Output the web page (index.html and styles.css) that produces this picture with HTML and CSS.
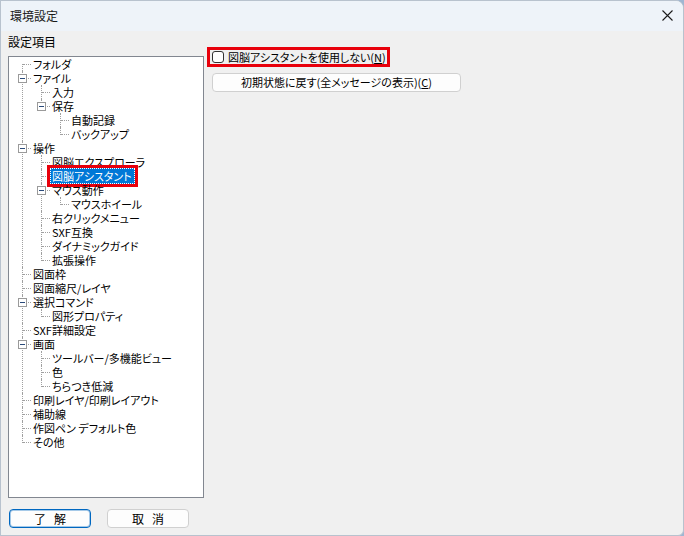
FILE: index.html
```html
<!DOCTYPE html>
<html lang="ja">
<head>
  <meta charset="UTF-8">
  <title>環境設定</title>
  <link rel="stylesheet" href="styles.css">
</head>
<body>
  <div class="window">
    <div class="titlebar">
      <span class="title">環境設定</span>
      <span class="close">
        <svg width="11" height="11" viewBox="0 0 11 11"><path d="M0.5 0.5 L10.5 10.5 M10.5 0.5 L0.5 10.5" stroke="#1b1b1b" stroke-width="1.1" fill="none"/></svg>
      </span>
    </div>

    <div class="content">
      <div class="left">
        <div class="caption">設定項目</div>
        <div class="tree">
          <ul>
            <li class="first"><div class="row"><span class="lbl">フォルダ</span></div></li>
            <li><div class="row"><span class="tg"></span><span class="lbl">ファイル</span></div>
              <ul>
                <li><div class="row"><span class="lbl">入力</span></div></li>
                <li><div class="row"><span class="tg"></span><span class="lbl">保存</span></div>
                  <ul>
                    <li><div class="row"><span class="lbl">自動記録</span></div></li>
                    <li><div class="row"><span class="lbl">バックアップ</span></div></li>
                  </ul>
                </li>
              </ul>
            </li>
            <li><div class="row"><span class="tg"></span><span class="lbl">操作</span></div>
              <ul>
                <li><div class="row"><span class="lbl">図脳エクスプローラ</span></div></li>
                <li><div class="row"><span class="lbl sel">図脳アシスタント</span></div></li>
                <li><div class="row"><span class="tg"></span><span class="lbl">マウス動作</span></div>
                  <ul>
                    <li><div class="row"><span class="lbl">マウスホイール</span></div></li>
                  </ul>
                </li>
                <li><div class="row"><span class="lbl">右クリックメニュー</span></div></li>
                <li><div class="row"><span class="lbl">SXF互換</span></div></li>
                <li><div class="row"><span class="lbl">ダイナミックガイド</span></div></li>
                <li><div class="row"><span class="lbl">拡張操作</span></div></li>
              </ul>
            </li>
            <li><div class="row"><span class="lbl">図面枠</span></div></li>
            <li><div class="row"><span class="lbl">図面縮尺/レイヤ</span></div></li>
            <li><div class="row"><span class="tg"></span><span class="lbl">選択コマンド</span></div>
              <ul>
                <li><div class="row"><span class="lbl">図形プロパティ</span></div></li>
              </ul>
            </li>
            <li><div class="row"><span class="lbl">SXF詳細設定</span></div></li>
            <li><div class="row"><span class="tg"></span><span class="lbl">画面</span></div>
              <ul>
                <li><div class="row"><span class="lbl">ツールバー/多機能ビュー</span></div></li>
                <li><div class="row"><span class="lbl">色</span></div></li>
                <li><div class="row"><span class="lbl">ちらつき低減</span></div></li>
              </ul>
            </li>
            <li><div class="row"><span class="lbl">印刷レイヤ/印刷レイアウト</span></div></li>
            <li><div class="row"><span class="lbl">補助線</span></div></li>
            <li><div class="row"><span class="lbl">作図ペン デフォルト色</span></div></li>
            <li><div class="row"><span class="lbl">その他</span></div></li>
          </ul>
        </div>
        <div class="buttons">
          <button class="btn default">了&nbsp;&nbsp;&nbsp;解</button>
          <button class="btn">取&nbsp;&nbsp;&nbsp;消</button>
        </div>
      </div>

      <div class="right">
        <label class="check mark">
          <span class="box"></span>
          <span>図脳アシスタントを使用しない(<u>N</u>)</span>
        </label>
        <button class="btn wide">初期状態に戻す(全メッセージの表示)(<u>C</u>)</button>
      </div>
    </div>
  </div>
</body>
</html>
```

FILE: styles.css
```css
* {
  box-sizing: border-box;
}
body {
  margin: 0;
  background: #9fb6d2;
  font-family: "Noto Sans CJK JP", sans-serif;
  font-size: 11px;
  color: #000;
  font-feature-settings: "palt";
}
.window {
  width: 684px;
  height: 536px;
  background: #f0f0f0;
  border: 1px solid #b8c2ce;
  border-top-right-radius: 8px;
  border-bottom-right-radius: 6px;
  overflow: hidden;
}
.titlebar {
  height: 30px;
  background: #eef3f9;
  display: flex;
  align-items: center;
  justify-content: space-between;
  padding: 0 10px 0 9px;
}
.title {
  color: #1a1a1a;
  font-size: 12px;
  line-height: 14px;
}
.close {
  display: flex;
  width: 11px;
  height: 11px;
  margin-top: -2px;
}
.content {
  display: flex;
  gap: 3px;
  padding: 4px 0 0 7px;
}
.left {
  width: 196px;
}
.caption {
  font-size: 12px;
  line-height: 14px;
  margin-bottom: 7px;
}
.tree {
  height: 442px;
  background: #fff;
  border: 1px solid #828790;
  overflow: hidden;
}
.tree ul {
  list-style: none;
  margin: 0;
  padding: 0;
}
.tree ul ul {
  margin-left: 19px;
}
.tree li {
  position: relative;
}
.tree li::before {
  content: "";
  position: absolute;
  left: 13px;
  top: 0;
  bottom: 0;
  border-left: 1px dotted #a0a0a0;
}
.tree li.first::before {
  top: 7px;
}
.tree li:last-child::before {
  bottom: auto;
  height: 8px;
}
.row {
  position: relative;
  height: 14px;
  line-height: 14px;
  padding-left: 22px;
  white-space: nowrap;
}
.row::before {
  content: "";
  position: absolute;
  left: 14px;
  top: 7px;
  width: 8px;
  border-top: 1px dotted #a0a0a0;
}
.tg {
  position: absolute;
  left: 9px;
  top: 3px;
  width: 9px;
  height: 9px;
  border: 1px solid #9a9a9a;
  background: #fff;
  z-index: 1;
}
.tg::after {
  content: "";
  position: absolute;
  left: 1px;
  top: 3px;
  width: 5px;
  height: 1px;
  background: #2a4a7a;
}
.lbl {
  display: inline-block;
  padding: 0 2px;
}
.lbl.sel {
  position: relative;
  height: 16px;
  line-height: 14px;
  margin-top: -1px;
  vertical-align: top;
  background: #0078d7;
  color: #fff;
  border: 1px dotted #fff;
  padding: 0 2px 0 1px;
  outline: 3px solid #e8000b;
}
.buttons {
  display: flex;
  gap: 16px;
  margin: 11px 0 0 1px;
}
.btn {
  font-family: inherit;
  font-size: 11px;
  font-feature-settings: "palt";
  height: 19px;
  line-height: 15px;
  padding: 0;
  background: #fdfdfd;
  border: 1px solid #d0d0d0;
  border-radius: 4px;
  color: #000;
}
.buttons .btn {
  width: 82px;
  font-size: 12px;
}
.btn.default {
  border-color: #0067c0;
  box-shadow: inset 0 0 0 1px rgba(0, 103, 192, 0.35);
}
.right {
  display: flex;
  flex-direction: column;
  align-items: flex-start;
  padding-top: 12px;
}
.check {
  display: flex;
  align-items: center;
  gap: 4px;
  height: 20px;
  line-height: 14px;
  padding: 0 1px 0 2px;
  white-space: nowrap;
}
.check.mark {
  border: 3px solid #e8000b;
}
.check .box {
  width: 12px;
  height: 12px;
  border: 1px solid #333;
  border-radius: 3px;
  background: #fff;
}
.btn.wide {
  width: 249px;
  margin: 6px 0 0 5px;
}
```
